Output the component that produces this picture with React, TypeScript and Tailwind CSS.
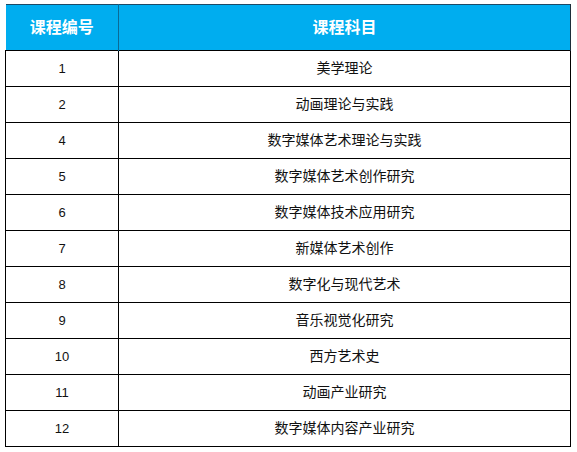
const rows: [string, string][] = [
  ['1', '美学理论'],
  ['2', '动画理论与实践'],
  ['4', '数字媒体艺术理论与实践'],
  ['5', '数字媒体艺术创作研究'],
  ['6', '数字媒体技术应用研究'],
  ['7', '新媒体艺术创作'],
  ['8', '数字化与现代艺术'],
  ['9', '音乐视觉化研究'],
  ['10', '西方艺术史'],
  ['11', '动画产业研究'],
  ['12', '数字媒体内容产业研究'],
];

export default function App() {
  return (
    <div className="h-[452px] w-[577px] bg-white pl-[5px] pt-[4px] font-['Liberation_Sans','Noto_Sans_CJK_SC',sans-serif]">
      <table className="w-[566px] table-fixed border-collapse text-[#111]">
        <colgroup>
          <col className="w-[113px]" />
          <col />
        </colgroup>
        <thead>
          <tr className="h-[46px] bg-[#00adef] text-[16px] font-bold text-white">
            <th className="border-t border-r border-t-[#1d4a66] border-r-[#0a6a96] font-bold">课程编号</th>
            <th className="border-t border-r border-t-[#1d4a66] border-r-[#1d2e3a] font-bold">课程科目</th>
          </tr>
        </thead>
        <tbody>
          {rows.map(([no, name]) => (
            <tr key={no} className="h-[36px]">
              <td className="border border-black text-center text-[13px]">{no}</td>
              <td className="border border-black text-center text-[14px]">{name}</td>
            </tr>
          ))}
        </tbody>
      </table>
    </div>
  );
}
